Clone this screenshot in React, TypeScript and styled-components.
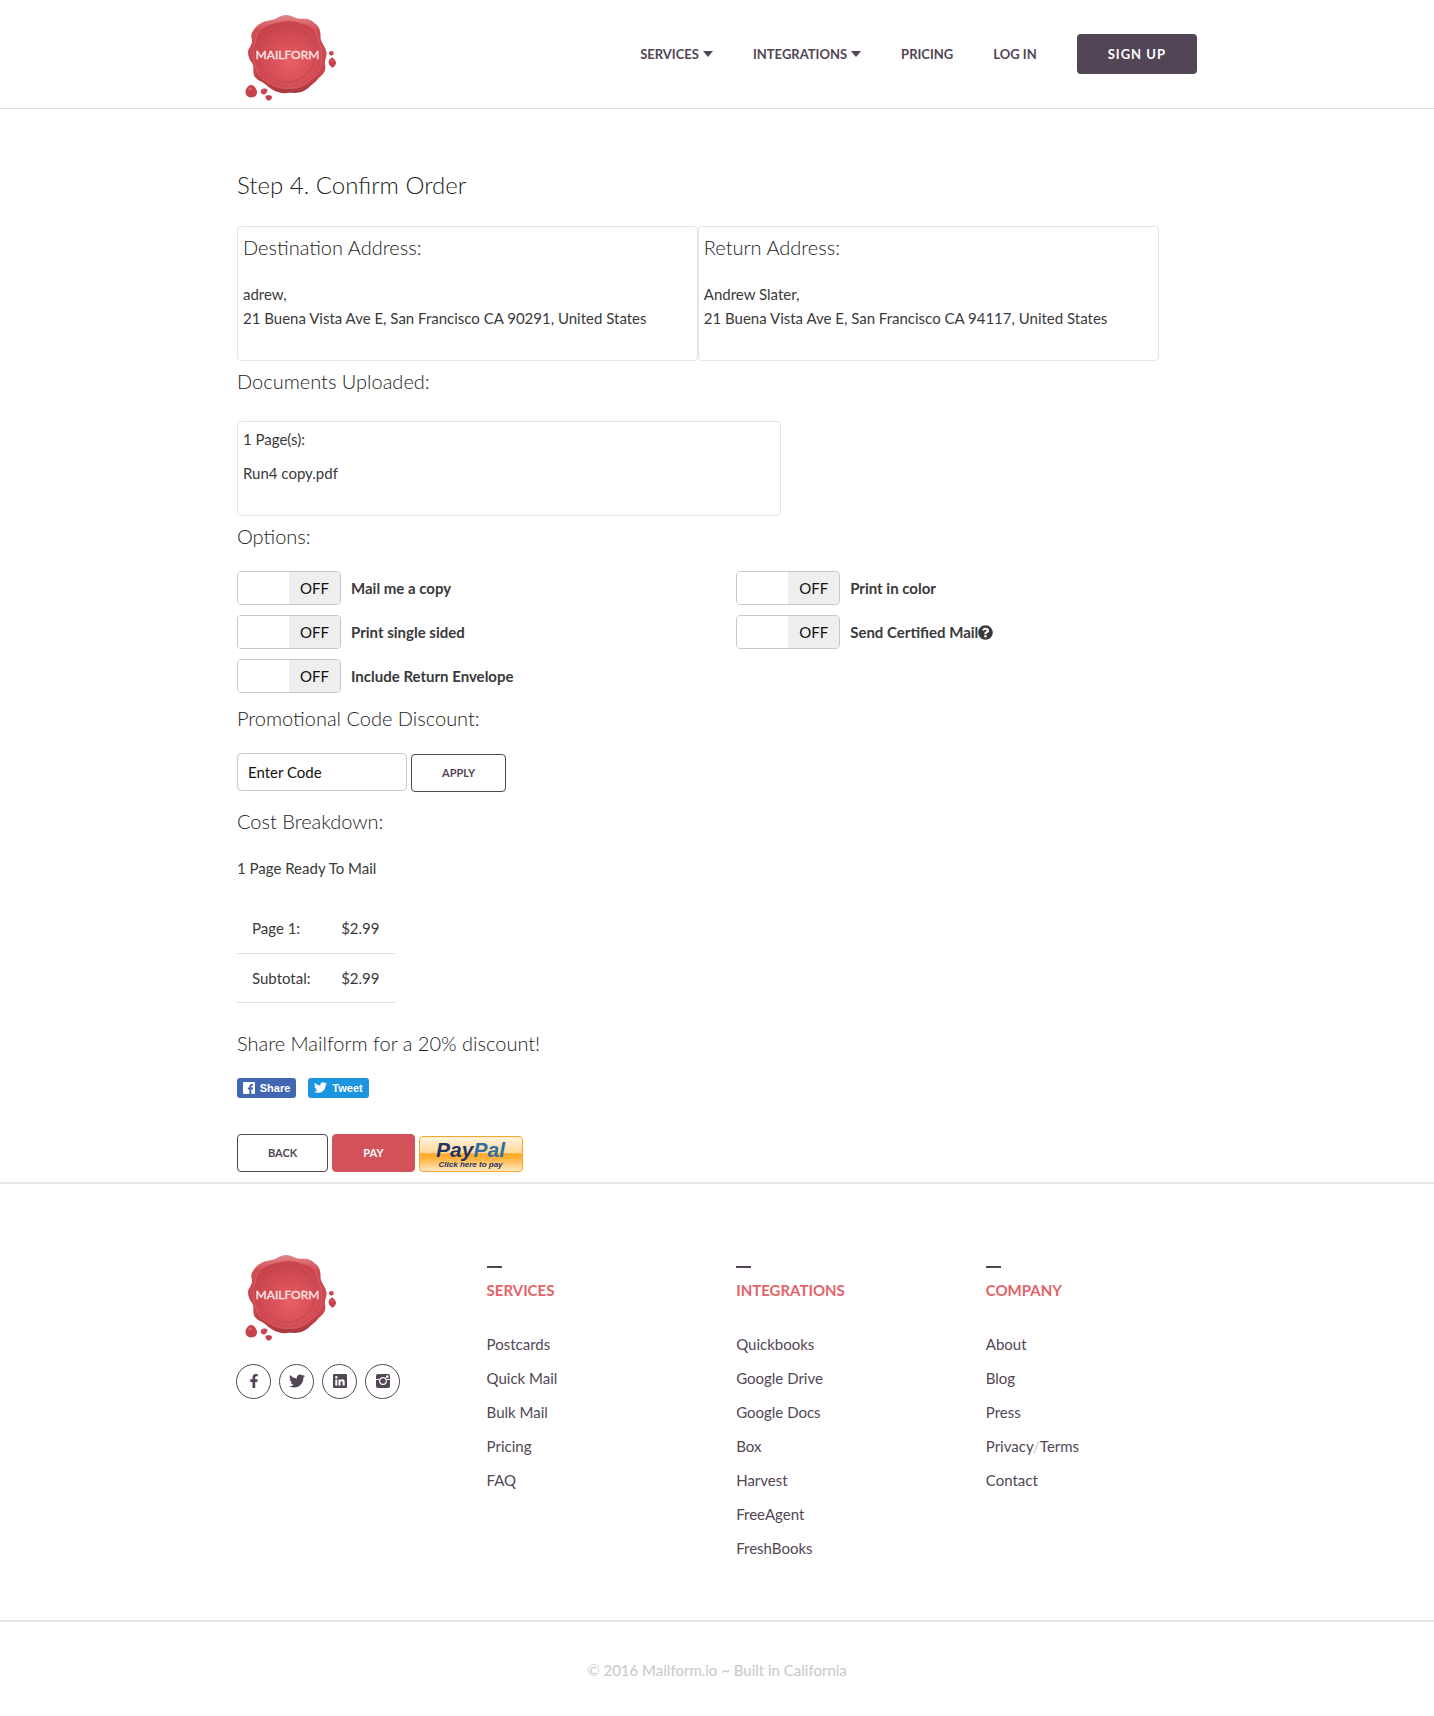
import React, { useState } from "react";
import styled, { createGlobalStyle } from "styled-components";
import { FaFacebookF, FaTwitter, FaQuestionCircle } from "react-icons/fa";

const ink = "#524656";
const red = "#d35158";
const text = "#3a3a3a";

const GlobalStyle = createGlobalStyle`
  *, *::before, *::after { box-sizing: border-box; }
  body {
    margin: 0;
    background: #fff;
    color: ${text};
    font: 15px/24px Lato, "Liberation Sans", sans-serif;
  }
  a { color: inherit; text-decoration: none; }
  ul { list-style: none; margin: 0; padding: 0; }
`;

const Container = styled.div`
  width: 100%;
  max-width: 960px;
  margin: 0 auto;
`;

const Header = styled.header`
  border-bottom: 1px solid #dfdfdf;
`;

const HeaderInner = styled(Container)`
  display: flex;
  align-items: center;
  justify-content: space-between;
  padding: 4px 0;
`;

const Nav = styled.nav`
  display: flex;
  align-items: center;
  gap: 40px;
  color: ${ink};
  font-size: 13px;
  font-weight: 700;
`;

const NavLink = styled.a`
  display: flex;
  align-items: center;
  gap: 4px;
`;

const Caret = styled.span`
  border: 5px solid transparent;
  border-top: 6px solid ${ink};
  border-bottom: 0;
`;

const SignUp = styled.a`
  padding: 0 31px;
  border-radius: 4px;
  background: ${ink};
  color: #fff;
  line-height: 40px;
  letter-spacing: 1px;
`;

const Main = styled(Container).attrs({ as: "main" })`
  padding: 61px 0 10px;
`;

const Title = styled.h1`
  margin: 0 0 26px;
  color: #222;
  font-size: 24px;
  font-weight: 300;
  line-height: 30px;
`;

const Heading = styled.h2<{ $top?: number; $bottom?: number }>`
  margin: ${(p) => p.$top ?? 5}px 0 ${(p) => p.$bottom ?? 20}px;
  color: #222;
  font-size: 20px;
  font-weight: 300;
  line-height: 30px;
`;

const Row = styled.div`
  display: flex;
  align-items: flex-end;
  gap: 4px;
`;

const Addresses = styled.div`
  display: grid;
  grid-template-columns: 1fr 1fr;
  width: 96%;
`;

const Panel = styled.section`
  padding: 0 5px 30px;
  border: 1px solid #e4e4e4;
  border-radius: 4px;
`;

const DocumentPanel = styled(Panel)`
  display: grid;
  gap: 10px;
  max-width: 544px;
  padding-top: 5px;
`;

const Line = styled.p`
  margin: 0;
`;

const Options = styled.div`
  display: grid;
  grid-template-columns: 52% 1fr;
  gap: 10px 0;
`;

const Option = styled.label`
  display: flex;
  align-items: center;
  font-weight: 700;
  cursor: pointer;
`;

const SwitchInput = styled.input`
  position: absolute;
  opacity: 0;
`;

const Track = styled.span<{ $on: boolean }>`
  display: flex;
  flex-direction: ${(p) => (p.$on ? "row-reverse" : "row")};
  width: 104px;
  height: 34px;
  margin-right: 10px;
  border: 1px solid #c8c8c8;
  border-radius: 4px;
  overflow: hidden;
`;

const Knob = styled.span`
  flex: 1;
  background: #fff;
`;

const State = styled.span<{ $on: boolean }>`
  flex: 1;
  background: ${(p) => (p.$on ? red : "#eee")};
  color: ${(p) => (p.$on ? "#fff" : "#111")};
  font-weight: 400;
  line-height: 32px;
  text-align: center;
`;

const CodeInput = styled.input`
  width: 170px;
  height: 38px;
  margin-bottom: 1px;
  padding: 0 10px;
  border: 1px solid #ccc;
  border-radius: 4px;
  background: #fff;
  color: #111;
  font: inherit;
  &::placeholder { color: #111; opacity: 1; }
`;

const Button = styled.button<{ $primary?: boolean }>`
  height: 38px;
  padding: 0 30px;
  border: 1px solid ${(p) => (p.$primary ? red : ink)};
  border-radius: 4px;
  background: ${(p) => (p.$primary ? red : "#fff")};
  color: ${(p) => (p.$primary ? "#fff" : ink)};
  font: 700 11px/36px Lato, sans-serif;
`;

const CostTable = styled.table`
  width: 158px;
  margin-top: 24px;
  border-collapse: collapse;
  th, td {
    height: 49px;
    padding: 0 15px;
    border-bottom: 1px solid #dfdfdf;
    font-weight: 400;
    text-align: left;
  }
`;

const ShareRow = styled.div`
  display: flex;
  gap: 12px;
  margin-bottom: 36px;
`;

const ShareButton = styled.a<{ $color: string; $width: number }>`
  display: flex;
  align-items: center;
  justify-content: center;
  gap: 5px;
  width: ${(p) => p.$width}px;
  height: 20px;
  border-radius: 3px;
  background: ${(p) => p.$color};
  color: #fff;
  font: 700 11px/20px "Liberation Sans", Arial, sans-serif;
`;

const PayPalButton = styled.button`
  display: flex;
  flex-direction: column;
  align-items: center;
  width: 104px;
  height: 36px;
  padding: 3px 0 0;
  border: 1px solid #f9a72b;
  border-radius: 4px;
  background: linear-gradient(#fff3de 0, #ffd99a 46%, #ffa823 50%, #ffb13b 62%, #ffe9c4 100%);
  color: #1f3667;
  font: italic 700 8px/10px "Liberation Sans", Arial, sans-serif;
`;

const PayPalName = styled.span`
  font-size: 21px;
  line-height: 20px;
  em { color: #2f6ea5; }
`;

const Footer = styled.footer`
  border-top: 2px solid #e4e4e4;
`;

const FooterGrid = styled(Container)`
  display: grid;
  grid-template-columns: 26% 26% 26% 1fr;
  padding: 60px 0;
  color: ${ink};
`;

const SocialRow = styled.div`
  display: flex;
  gap: 8px;
  margin: 20px -1px 0;
`;

const SocialLink = styled.a`
  display: flex;
  align-items: center;
  justify-content: center;
  width: 35px;
  height: 35px;
  border: 1px solid ${ink};
  border-radius: 50%;
`;

const LinkColumn = styled.section`
  padding-top: 22px;
  &::before {
    content: "";
    display: block;
    width: 15px;
    height: 2px;
    background: ${ink};
  }
`;

const ColumnTitle = styled.h3`
  margin: 10px 0 30px;
  color: #e26468;
  font-size: 15px;
  font-weight: 700;
  line-height: 24px;
`;

const LinkList = styled.ul`
  display: grid;
  gap: 10px;
  color: ${ink};
`;

const Slash = styled.span`
  color: #ccc;
`;

const Copyright = styled.p`
  margin: 0;
  padding: 36px 0;
  border-top: 2px solid #e4e4e4;
  color: #c8c8c8;
  text-align: center;
`;

const Seal = ({ id }: { id: string }) => (
  <svg width="100" height="100" viewBox="0 0 100 100" role="img" aria-label="Mailform" display="block">
    <defs>
      <radialGradient id={id} cx="0.55" cy="0.62" r="0.6">
        <stop offset="0" stopColor="#e85f64" />
        <stop offset="0.6" stopColor="#d54d54" />
        <stop offset="1" stopColor="#c8444c" />
      </radialGradient>
      <linearGradient id={id + "rim"} x1="0" y1="0" x2="0" y2="1">
        <stop offset="0" stopColor="#e0878a" />
        <stop offset="0.2" stopColor="#d04c54" />
        <stop offset="0.7" stopColor="#cb474f" />
        <stop offset="1" stopColor="#a93740" />
      </linearGradient>
    </defs>
    <path
      fill={`url(#${id}rim)`}
      d="M50 11C54 11 57 14 61 14.500C66 15 71 14 75 17C79 20 82 22 83 27C84 30 83 33 84 36C86 41 89 44 89.500 49C90 53 87 56 88 60C89 65 88 69 84 72C81 74 80 77 77 79C72 83 68 88 62 88.500C58 89.500 54 88.500 50 89C45 90 41 88 37 86.500C33 85 29 80 25 78C21 76 17 74 16.500 69C16 64 17 62 15 59C12 55 11 52 11 48C11 44 15 42 15 37C15 34 13 31 16 27C18 23 22 20 26 18C30 16 34 17 38 15C42 13 45 11 50 11Z"
    />
    <path
      fill={`url(#${id})`}
      stroke="#de6d71"
      strokeOpacity="0.6"
      d="M50 17C57 16 61 19 67 20C74 21 77 24 79 30C81 36 84 41 84.500 49C85 57 85 65 79 71C73 77 67 83 59 84C50 85 42 85 35 81C27 77 21 72 19 64C17 57 15 52 17 44C19 36 18 31 24 25C30 20 41 18 50 17Z"
    />
    <circle cx="50" cy="50" r="28" fill="none" stroke="#bc434b" strokeWidth="1" strokeOpacity="0.75" />
    <g fill="#c5434c">
      <path d="M14 81C17 81 20 85 20 88C20 92 17 93.500 14 93.500C11 93.500 8.500 91 8.500 88C8.500 85 11 81 14 81Z" />
      <path d="M24 86C25 84 30 84 30.500 86C30.500 89 28 91 26 90.500C24 90 23.500 88 24 86Z" />
      <path d="M28.500 92C30 91 34 91 35 92.500C35 95 33 97 31 96.500C29.500 96 28 94 28.500 92Z" />
      <circle cx="94.300" cy="49.300" r="2.300" />
      <path d="M95.500 53.500C97 55 99.500 57 99 59.500C98.500 62 96 64 95 63.500C93 62 91.500 60 91.500 58C92 55 94 54 95.500 53.500Z" />
    </g>
    <g fill="#e0777b" opacity="0.7">
      <circle cx="13" cy="85" r="1.500" />
      <circle cx="26.500" cy="86.500" r="1" />
      <circle cx="94.500" cy="57" r="1" />
    </g>
    <text
      x="50.500"
      y="55"
      textAnchor="middle"
      fill="#fbe9e9"
      stroke="#fbe9e9"
      strokeWidth="0.300"
      fontFamily="Lato, sans-serif"
      fontSize="12"
    >
      MAILFORM
    </text>
  </svg>
);

const FacebookBadge = () => (
  <svg width="12" height="12" viewBox="0 0 12 12" aria-hidden="true">
    <path
      fill="#fff"
      d="M1 0H11Q12 0 12 1V11Q12 12 11 12H8.300V7.400H9.800L10.100 5.600H8.300V4.400Q8.300 3.600 9.200 3.600H10.100V2Q6.400 1.400 6.400 4.200V5.600H4.900V7.400H6.400V12H1Q0 12 0 11V1Q0 0 1 0Z"
    />
  </svg>
);

const LinkedInIcon = () => (
  <svg width="14" height="14" viewBox="0 0 14 14" aria-hidden="true">
    <rect width="14" height="14" rx="1" fill={ink} />
    <circle cx="3.300" cy="3.200" r="1.200" fill="#fff" />
    <path fill="#fff" d="M2.300 5.400H4.300V11.600H2.300ZM5.500 5.400H7.400V6.300Q8 5.200 9.400 5.200Q11.700 5.200 11.700 8V11.600H9.700V8.400Q9.700 6.900 8.700 6.900Q7.500 6.900 7.500 8.400V11.600H5.500Z" />
  </svg>
);

const CameraIcon = () => (
  <svg width="14" height="14" viewBox="0 0 14 14" aria-hidden="true">
    <rect width="14" height="14" rx="2" fill={ink} />
    <path d="M0 5.500H14" stroke="#fff" />
    <circle cx="7" cy="7" r="4" fill={ink} />
    <circle cx="7" cy="7" r="3.300" fill={ink} stroke="#fff" strokeWidth="1.200" />
    <rect x="10" y="1.500" width="2.500" height="2.300" fill="#fff" />
  </svg>
);

const Switch = ({ label, help }: { label: string; help?: boolean }) => {
  const [on, setOn] = useState(false);
  return (
    <Option>
      <SwitchInput type="checkbox" role="switch" checked={on} onChange={() => setOn(!on)} />
      <Track $on={on}>
        <Knob />
        <State $on={on}>{on ? "ON" : "OFF"}</State>
      </Track>
      {label}
      {help && <FaQuestionCircle size={15} />}
    </Option>
  );
};

const options = [
  { label: "Mail me a copy" },
  { label: "Print in color" },
  { label: "Print single sided" },
  { label: "Send Certified Mail", help: true },
  { label: "Include Return Envelope" },
];

const costs = [
  ["Page 1:", "$2.99"],
  ["Subtotal:", "$2.99"],
];

const columns = [
  { title: "SERVICES", links: ["Postcards", "Quick Mail", "Bulk Mail", "Pricing", "FAQ"] },
  {
    title: "INTEGRATIONS",
    links: ["Quickbooks", "Google Drive", "Google Docs", "Box", "Harvest", "FreeAgent", "FreshBooks"],
  },
  { title: "COMPANY", links: ["About", "Blog", "Press", "Privacy/Terms", "Contact"] },
];

export default function App() {
  return (
    <>
      <GlobalStyle />
      <Header>
        <HeaderInner>
          <a href="#home"><Seal id="sealTop" /></a>
          <Nav>
            <NavLink href="#services">SERVICES<Caret /></NavLink>
            <NavLink href="#integrations">INTEGRATIONS<Caret /></NavLink>
            <NavLink href="#pricing">PRICING</NavLink>
            <NavLink href="#login">LOG IN</NavLink>
            <SignUp href="#signup">SIGN UP</SignUp>
          </Nav>
        </HeaderInner>
      </Header>

      <Main>
        <Title>Step 4. Confirm Order</Title>
        <Addresses>
          <Panel>
            <Heading>Destination Address:</Heading>
            <Line>adrew,</Line>
            <Line>21 Buena Vista Ave E, San Francisco CA 90291, United States</Line>
          </Panel>
          <Panel>
            <Heading>Return Address:</Heading>
            <Line>Andrew Slater,</Line>
            <Line>21 Buena Vista Ave E, San Francisco CA 94117, United States</Line>
          </Panel>
        </Addresses>

        <Heading $bottom={25}>Documents Uploaded:</Heading>
        <DocumentPanel>
          <Line>1 Page(s):</Line>
          <Line>Run4 copy.pdf</Line>
        </DocumentPanel>

        <Heading>Options:</Heading>
        <Options>
          {options.map((o) => <Switch key={o.label} {...o} />)}
        </Options>

        <Heading $top={10}>Promotional Code Discount:</Heading>
        <Row>
          <CodeInput aria-label="Promotional code" placeholder="Enter Code" />
          <Button type="button">APPLY</Button>
        </Row>

        <Heading $top={14}>Cost Breakdown:</Heading>
        <Line>1 Page Ready To Mail</Line>
        <CostTable>
          <tbody>
            {costs.map(([name, price]) => (
              <tr key={name}><th scope="row">{name}</th><td>{price}</td></tr>
            ))}
          </tbody>
        </CostTable>

        <Heading $top={25}>Share Mailform for a 20% discount!</Heading>
        <ShareRow>
          <ShareButton href="#share" $color="#4267b2" $width={59}><FacebookBadge />Share</ShareButton>
          <ShareButton href="#tweet" $color="#1b95e0" $width={61}><FaTwitter size={13} />Tweet</ShareButton>
        </ShareRow>
        <Row>
          <Button type="button">BACK</Button>
          <Button type="button" $primary>PAY</Button>
          <PayPalButton type="button">
            <PayPalName>Pay<em>Pal</em></PayPalName>
            Click here to pay
          </PayPalButton>
        </Row>
      </Main>

      <Footer>
        <FooterGrid>
          <div>
            <a href="#home"><Seal id="sealBottom" /></a>
            <SocialRow>
              <SocialLink href="#facebook" aria-label="Facebook"><FaFacebookF size={14} /></SocialLink>
              <SocialLink href="#twitter" aria-label="Twitter"><FaTwitter size={16} /></SocialLink>
              <SocialLink href="#linkedin" aria-label="LinkedIn"><LinkedInIcon /></SocialLink>
              <SocialLink href="#instagram" aria-label="Instagram"><CameraIcon /></SocialLink>
            </SocialRow>
          </div>
          {columns.map((c) => (
            <LinkColumn key={c.title}>
              <ColumnTitle>{c.title}</ColumnTitle>
              <LinkList>
                {c.links.map((link) => (
                  <li key={link}>
                    {link.split("/").map((part, i) => (
                      <React.Fragment key={part}>
                        {i > 0 && <Slash>/</Slash>}
                        <a href={"#" + part.toLowerCase().replace(" ", "-")}>{part}</a>
                      </React.Fragment>
                    ))}
                  </li>
                ))}
              </LinkList>
            </LinkColumn>
          ))}
        </FooterGrid>
        <Copyright>© 2016 Mailform.io ~ Built in California</Copyright>
      </Footer>
    </>
  );
}
